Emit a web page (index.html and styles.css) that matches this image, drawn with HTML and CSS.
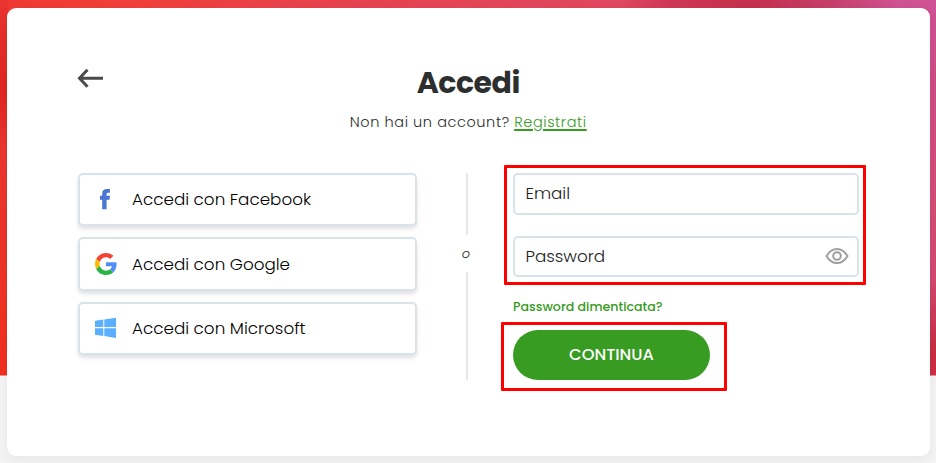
FILE: index.html
```
<!DOCTYPE html>
<html lang="it">
<head>
    <meta charset="UTF-8">
    <meta name="viewport" content="width=device-width, initial-scale=1.0">
    <title>Accedi</title>
    <link rel="stylesheet" href="styles.css">
</head>
<body>
    <div class="page">
        <main class="card">
            <header class="card-header">
                <a class="back" href="#" aria-label="Indietro">
                    <svg width="28" height="22" viewBox="0 0 28 22" fill="none" stroke="#4a4a4a" stroke-width="3">
                        <path d="M27 11.3H4M11.500 2.800L3.500 11.300l8 8.500"/>
                    </svg>
                </a>
                <h1>Accedi</h1>
                <p class="subtitle">Non hai un account? <a href="#">Registrati</a></p>
            </header>
            <div class="columns">
                <div class="social">
                    <button class="social-btn" type="button">
                        <svg width="22" height="22" viewBox="0 0 22 22">
                            <path fill="#4a76d4" d="M7.200 21.200V11.800H5V7.800h2.200V5.700C7.200 2.500 8.900 1 12 1H15v3.800h-1.600c-1.400 0-1.800.5-1.800 1.700v1.300H15l-.4 4h-3v9.400z"/>
                        </svg>
                        <span>Accedi con Facebook</span>
                    </button>
                    <button class="social-btn" type="button">
                        <svg width="22" height="22" viewBox="0 0 48 48">
                            <path fill="#f44336" d="M24 9.500c3.540 0 6.710 1.220 9.210 3.600l6.850-6.850C35.900 2.380 30.470 0 24 0 14.620 0 6.510 5.380 2.560 13.220l7.980 6.190C12.430 13.720 17.740 9.500 24 9.500z"/>
                            <path fill="#518ef8" d="M46.980 24.550c0-1.570-.15-3.090-.38-4.550H24v9.020h12.940c-.58 2.960-2.260 5.480-4.780 7.180l7.730 6c4.510-4.180 7.090-10.360 7.090-17.650z"/>
                            <path fill="#fbbb00" d="M10.530 28.590c-.48-1.450-.76-2.990-.76-4.590s.27-3.140.76-4.590l-7.980-6.190C.92 16.460 0 20.120 0 24c0 3.880.92 7.540 2.560 10.780z"/>
                            <path fill="#28b446" d="M24 48c6.480 0 11.930-2.130 15.890-5.810l-7.730-6c-2.150 1.450-4.920 2.300-8.160 2.300-6.260 0-11.570-4.220-13.470-9.910l-7.980 6.190C6.510 42.620 14.620 48 24 48z"/>
                        </svg>
                        <span>Accedi con Google</span>
                    </button>
                    <button class="social-btn" type="button">
                        <svg width="22" height="22" viewBox="0 0 22 22" fill="#5aafff">
                            <path d="M0 3.700L8.300 2.600V10.100H0zM9.300 2.400L21 .8V10.100H9.300zM0 11.200H8.300V18.900L0 17.800zM9.300 11.200H21V20.900L9.300 19.100z"/>
                        </svg>
                        <span>Accedi con Microsoft</span>
                    </button>
                </div>
                <div class="divider"><span>o</span></div>
                <form class="login">
                    <div class="highlight fields">
                        <div class="field">
                            <input type="email" placeholder="Email" aria-label="Email">
                        </div>
                        <div class="field">
                            <input type="password" placeholder="Password" aria-label="Password">
                            <svg width="24" height="18" viewBox="0 0 24 18" fill="none" stroke="#a0a0a0" stroke-width="2">
                                <path d="M1.500 9C4.200 4.300 7.500 1.900 12 1.900S19.800 4.300 22.500 9C19.800 13.700 16.500 16.100 12 16.100S4.200 13.700 1.500 9z"/>
                                <circle cx="12" cy="9" r="3.800"/>
                            </svg>
                        </div>
                    </div>
                    <a class="forgot" href="#">Password dimenticata?</a>
                    <div class="highlight submit">
                        <button class="continue" type="button">CONTINUA</button>
                    </div>
                </form>
            </div>
        </main>
    </div>
</body>
</html>
```
FILE: styles.css
```
* {
    box-sizing: border-box;
}

body {
    margin: 0;
    font-family: Poppins, Inter, sans-serif;
    font-weight: 300;
    color: #2d2f2f;
    background: #f4f4f4;
}

.page {
    height: 463px;
    padding: 7.500px 6.500px 0 7px;
    overflow: hidden;
    background:
        linear-gradient(180deg, #cf5297 0, #cf4d85 80px, #d34d78 180px, #d34870 280px, #c72d42 350px, #d02d46 375px) right 0 / 8px 375.500px no-repeat,
        linear-gradient(180deg, #e93430 0, #e12522 90px, #eb3630 150px, #f2301f 375px) 0 0 / 8px 375.500px no-repeat,
        linear-gradient(90deg, #ef3833 0, #f13f3a 130px, #e8424c 300px, #e04760 620px, #cf3855 670px, #c42f4c 750px, #c63f6a 830px, #cf5292 900px) 0 0 / 100% 20px no-repeat,
        #f4f4f4;
}

.card {
    height: 448px;
    padding: 0 63px 0 71px;
    border-radius: 9px;
    background: #fff;
    box-shadow: 0 4px 14px rgba(0, 0, 0, 0.06);
}

.card-header {
    display: grid;
    grid-template-columns: 60px 1fr 60px;
    grid-template-rows: 40px auto;
    height: 165.500px;
    padding-top: 54.500px;
    padding-right: 8px;
    text-align: center;
}

.back {
    height: 22px;
    margin: 5px 0 0 -2px;
    text-align: left;
}

.back svg {
    display: block;
}

h1 {
    margin: 1px 0 0;
    font-size: 30px;
    line-height: 40px;
    font-weight: 700;
    letter-spacing: -0.5px;
}

.subtitle {
    grid-column: 1 / -1;
    margin: 9px 0 0;
    font-size: 14.500px;
    line-height: 22px;
    letter-spacing: 0.58px;
}

.subtitle a {
    color: #389b22;
    text-underline-offset: 2px;
    text-decoration-thickness: 1.500px;
}

.columns {
    display: flex;
    align-items: flex-start;
}

.social {
    display: flex;
    flex-direction: column;
    flex-shrink: 0;
    gap: 11px;
    width: 339px;
}

.social-btn {
    display: flex;
    align-items: center;
    gap: 15px;
    height: 53.400px;
    padding: 0 15px 1px;
    border: 2px solid #dae3ea;
    border-radius: 5px;
    background: #fff;
    box-shadow: 0 3px 4px rgba(0, 0, 0, 0.12);
    font: inherit;
    font-size: 16.750px;
    color: #000;
    text-align: left;
}

.divider {
    display: flex;
    flex-direction: column;
    flex-shrink: 0;
    align-items: center;
    width: 20px;
    height: 207px;
    margin-left: 39.500px;
    font-size: 13px;
    font-style: italic;
}

.divider::before,
.divider::after {
    content: "";
    width: 2px;
    background: #e4e6e8;
}

.divider::before {
    height: 62px;
}

.divider::after {
    flex: 1;
}

.divider span {
    height: 37px;
    padding-right: 1px;
    line-height: 37px;
}

.login {
    margin: -8px 0 0 24.500px;
}

.highlight {
    border: 3px solid #f00;
    border-radius: 1px;
}

.fields {
    display: flex;
    flex-direction: column;
    gap: 21px;
    width: 362px;
    height: 120px;
    margin-left: 3px;
    padding: 5px 4px 5px 6px;
}

.field {
    display: flex;
    align-items: center;
    height: 42px;
    padding: 0 8px 0 10.500px;
    border: 2px solid #dae3ea;
    border-radius: 5px;
}

.field input {
    flex: 1;
    min-width: 0;
    padding: 0 0 1px;
    border: 0;
    outline: 0;
    background: none;
    font: inherit;
    font-size: 16.750px;
}

.field input::placeholder {
    color: #222;
    opacity: 1;
}

.forgot {
    display: block;
    margin-left: 12px;
    height: 37px;
    padding-top: 12px;
    font-size: 12.600px;
    line-height: 20px;
    font-weight: 500;
    color: #389b22;
    text-decoration: none;
}

.submit {
    width: 226px;
    height: 69px;
    padding: 5px 9px;
}

.continue {
    display: block;
    width: 197px;
    height: 50px;
    padding: 0 0 2px;
    border: 0;
    border-radius: 25px;
    background: #389b22;
    color: #fff;
    font: inherit;
    font-size: 16.300px;
    font-weight: 500;
}
```
